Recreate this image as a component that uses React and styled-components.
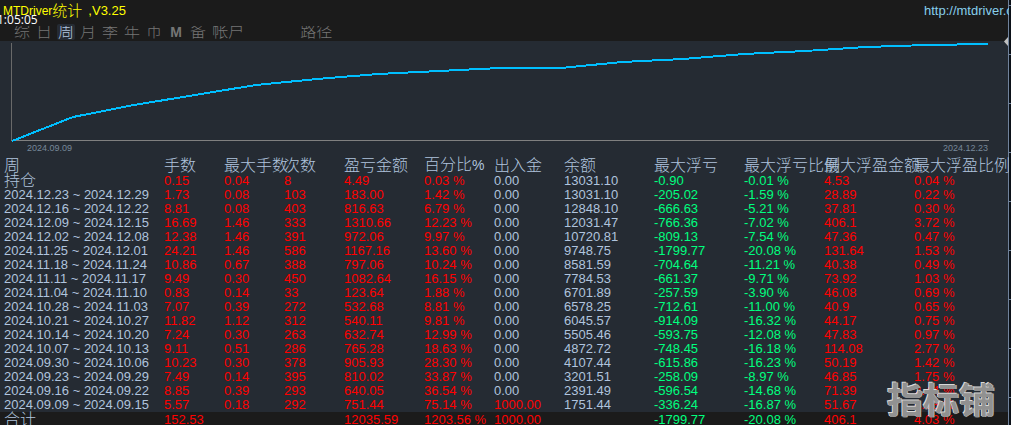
import React, { useState } from 'react';
import styled, { createGlobalStyle } from 'styled-components';

const GlobalStyle = createGlobalStyle`
  * {
    box-sizing: border-box;
  }

  body {
    margin: 0;
    overflow: hidden;
    background: #0b1118;
    color: #b0c4de;
    font-family: 'Liberation Sans', 'Noto Sans CJK SC', sans-serif;
    font-size: 13px;
  }
`;

const Screen = styled.div`
  position: relative;
  display: flex;
  height: 100vh;
  overflow: hidden;
`;

const Panel = styled.main`
  flex: 1;
  min-width: 0;
  background: #252b33;
  border-right: 1px solid #71839c;
  border-bottom: 1px solid #71839c;
`;

const PriceScale = styled.div`
  width: 2px;
  background: repeating-linear-gradient(#0b1118 0 5px, #71839c 5px 6px, #0b1118 6px 49px);
`;

const Header = styled.header`
  height: 41px;
  background: #1b1b1b;
`;

const TitleRow = styled.div`
  display: flex;
  justify-content: space-between;
  height: 24px;
  padding-left: 3px;
  line-height: 22px;
  white-space: nowrap;
`;

const Title = styled.h1`
  display: flex;
  margin: 0;
  color: #ffff00;
  font-size: 12px;
  font-weight: 400;
`;

const TitleSuffix = styled.span`
  font-size: 15px;
  font-weight: 300;
`;

const Version = styled.span`
  margin-left: 6px;
  font-size: 13px;
`;

const SiteLink = styled.a`
  width: 84px;
  color: #87ceeb;
  text-decoration: none;
`;

const Clock = styled.time`
  position: absolute;
  top: 11px;
  left: -3px;
  color: #fff;
  font-family: 'Open Sans', sans-serif;
  font-size: 12px;
  line-height: 17px;
`;

const Tabs = styled.nav`
  display: flex;
  gap: 4px;
  padding-left: 13px;
`;

const Tab = styled.button`
  min-width: 18px;
  height: 16px;
  padding: 2px 1px 0;
  border: none;
  border-radius: 2px;
  background: ${props => (props.$active ? '#252b33' : 'transparent')};
  color: ${props => (props.$active ? '#b0c4de' : '#757575')};
  font-family: inherit;
  font-size: 16px;
  font-weight: 300;
  white-space: nowrap;
  cursor: pointer;

  /* labels are trimmed at the top, like in the terminal */
  span {
    display: block;
    height: 14px;
    line-height: 12px;
    overflow: hidden;
  }

  &.latin {
    font-size: 14px;
    font-weight: 700;
  }

  &.path {
    margin-left: 50px;
  }
`;

const Chart = styled.section`
  height: 115px;
  padding: 1px 18px 0 11px;

  svg {
    display: block;
    width: 100%;
    height: 101px;
  }
`;

const ChartDates = styled.div`
  display: flex;
  justify-content: space-between;
  padding: 0 2px 0 16px;
  color: #778899;
  font-size: 9px;
  line-height: 10px;
`;

const Table = styled.table`
  width: 100%;
  table-layout: fixed;
  border-collapse: collapse;
  white-space: nowrap;
`;

const Col = styled.col`
  width: ${props => (props.$width ? `${props.$width}px` : 'auto')};
`;

const HeadCell = styled.th`
  height: 17px;
  padding: 0;
  font-size: 16px;
  font-weight: 300;
  line-height: 17px;
  text-align: left;

  &:first-child {
    padding-left: 4px;
  }

  small {
    font-size: 14px;
    font-weight: 400;
  }
`;

const tones = {
  up: '#ff0000',
  down: '#00ff7f',
  plain: '#b0c4de',
};

const Cell = styled.td`
  height: 14px;
  padding: 0;
  color: ${props => tones[props.$tone]};
  line-height: 14px;
`;

const PeriodCell = styled.th`
  height: 14px;
  padding: 0 0 0 4px;
  font-size: ${props => (props.$label ? '16px' : '13px')};
  font-weight: ${props => (props.$label ? 300 : 400)};
  line-height: 14px;
  text-align: left;
`;

const TotalRow = styled.tr`
  background: #1b1b1b;

  ${Cell}, ${PeriodCell} {
    line-height: 15px;
  }
`;

const Marker = styled.svg`
  position: absolute;
  top: 37px;
  right: 3px;
`;

const Watermark = styled.div`
  position: absolute;
  right: 16px;
  bottom: 6px;
  color: #919191;
  font-family: 'Noto Sans CJK SC', sans-serif;
  font-size: 36px;
  font-weight: 700;
  line-height: 42px;
  text-shadow: -1px -1px 0 #d8d8d8, 1px 0 0 #b4b4b4;
  pointer-events: none;
`;

const tabs = ['综', '日', '周', '月', '季', '年', '币', 'M', '备', '帐户', '路径'];

const columns = [
  { title: '周', width: 164 },
  { title: '手数', width: 60, tone: 'up' },
  { title: '最大手数', width: 60, tone: 'up' },
  { title: '次数', width: 60, tone: 'up' },
  { title: '盈亏金额', width: 80, tone: 'up' },
  { title: '百分比', unit: '%', width: 70, tone: 'up' },
  { title: '出入金', width: 70, tone: 'plain' },
  { title: '余额', width: 90, tone: 'plain' },
  { title: '最大浮亏', width: 90, tone: 'down' },
  { title: '最大浮亏比例', width: 80, tone: 'down' },
  { title: '最大浮盈金额', width: 90, tone: 'up' },
  { title: '最大浮盈比例', tone: 'up' },
];

const rows = [
  ['持仓', '0.15', '0.04', '8', '4.49', '0.03 %', '0.00', '13031.10', '-0.90', '-0.01 %', '4.53', '0.04 %'],
  ['2024.12.23 ~ 2024.12.29', '1.73', '0.08', '103', '183.00', '1.42 %', '0.00', '13031.10', '-205.02', '-1.59 %', '28.89', '0.22 %'],
  ['2024.12.16 ~ 2024.12.22', '8.81', '0.08', '403', '816.63', '6.79 %', '0.00', '12848.10', '-666.63', '-5.21 %', '37.81', '0.30 %'],
  ['2024.12.09 ~ 2024.12.15', '16.69', '1.46', '333', '1310.66', '12.23 %', '0.00', '12031.47', '-766.36', '-7.02 %', '406.1', '3.72 %'],
  ['2024.12.02 ~ 2024.12.08', '12.38', '1.46', '391', '972.06', '9.97 %', '0.00', '10720.81', '-809.13', '-7.54 %', '47.36', '0.47 %'],
  ['2024.11.25 ~ 2024.12.01', '24.21', '1.46', '586', '1167.16', '13.60 %', '0.00', '9748.75', '-1799.77', '-20.08 %', '131.64', '1.53 %'],
  ['2024.11.18 ~ 2024.11.24', '10.86', '0.67', '388', '797.06', '10.24 %', '0.00', '8581.59', '-704.64', '-11.21 %', '40.38', '0.49 %'],
  ['2024.11.11 ~ 2024.11.17', '9.49', '0.30', '450', '1082.64', '16.15 %', '0.00', '7784.53', '-661.37', '-9.71 %', '73.92', '1.03 %'],
  ['2024.11.04 ~ 2024.11.10', '0.83', '0.14', '33', '123.64', '1.88 %', '0.00', '6701.89', '-257.59', '-3.90 %', '46.08', '0.69 %'],
  ['2024.10.28 ~ 2024.11.03', '7.07', '0.39', '272', '532.68', '8.81 %', '0.00', '6578.25', '-712.61', '-11.00 %', '40.9', '0.65 %'],
  ['2024.10.21 ~ 2024.10.27', '11.82', '1.12', '312', '540.11', '9.81 %', '0.00', '6045.57', '-914.09', '-16.32 %', '44.17', '0.75 %'],
  ['2024.10.14 ~ 2024.10.20', '7.24', '0.30', '263', '632.74', '12.99 %', '0.00', '5505.46', '-593.75', '-12.08 %', '47.83', '0.97 %'],
  ['2024.10.07 ~ 2024.10.13', '9.11', '0.51', '286', '765.28', '18.63 %', '0.00', '4872.72', '-748.45', '-16.18 %', '114.08', '2.77 %'],
  ['2024.09.30 ~ 2024.10.06', '10.23', '0.30', '378', '905.93', '28.30 %', '0.00', '4107.44', '-615.86', '-16.23 %', '50.19', '1.42 %'],
  ['2024.09.23 ~ 2024.09.29', '7.49', '0.14', '395', '810.02', '33.87 %', '0.00', '3201.51', '-258.09', '-8.97 %', '46.85', '1.75 %'],
  ['2024.09.16 ~ 2024.09.22', '8.85', '0.39', '293', '640.05', '36.54 %', '0.00', '2391.49', '-596.54', '-14.68 %', '71.39', '2.44 %'],
  ['2024.09.09 ~ 2024.09.15', '5.57', '0.18', '292', '751.44', '75.14 %', '1000.00', '1751.44', '-336.24', '-16.87 %', '51.67', '4.03 %'],
];

const total = ['合计', '152.53', '', '', '12035.59', '1203.56 %', '1000.00', '', '-1799.77', '-20.08 %', '406.1', '4.03 %'];

// y of the balance line at each week, oldest first
const balance = [99, 75, 63, 53, 43, 37, 32, 29, 26, 26, 20, 17, 12, 9, 5, 3, 2];
const points = balance.map((y, i) => `${1 + i * 61},${y}`).join(' ');

const toneOf = (value, index) => {
  if (columns[index].title === '出入金' && Number(value) > 0) return 'up';
  return columns[index].tone;
};

const RowCells = ({ values }) => (
  <>
    <PeriodCell scope="row" $label={!values[0].includes('~')}>{values[0]}</PeriodCell>
    {values.slice(1).map((value, i) => (
      <Cell key={i} $tone={toneOf(value, i + 1)}>{value}</Cell>
    ))}
  </>
);

const BalanceChart = () => (
  <Chart>
    <svg viewBox="0 0 979 101" preserveAspectRatio="none" role="img" aria-label="余额">
      <path d="M0.5 1V99" stroke="#696969" fill="none" />
      <path d="M0 98.5H978" stroke="#808080" fill="none" />
      <polyline points={points} fill="none" stroke="#00bfff" strokeWidth="2" shapeRendering="crispEdges" />
    </svg>
    <ChartDates>
      <span>2024.09.09</span>
      <span>2024.12.23</span>
    </ChartDates>
  </Chart>
);

const App = () => {
  const [activeTab, setActiveTab] = useState('周');

  const tabClass = tab => {
    if (tab === 'M') return 'latin';
    return tab === '路径' ? 'path' : undefined;
  };

  return (
    <Screen>
      <GlobalStyle />
      <Panel>
        <Header>
          <TitleRow>
            <Title>
              MTDriver
              <TitleSuffix>统计</TitleSuffix>
              <Version>,V3.25</Version>
            </Title>
            <SiteLink href="http://mtdriver.com">http://mtdriver.com</SiteLink>
          </TitleRow>
          <Tabs>
            {tabs.map(tab => (
              <Tab
                key={tab}
                className={tabClass(tab)}
                $active={tab === activeTab}
                onClick={() => setActiveTab(tab)}
              >
                <span>{tab}</span>
              </Tab>
            ))}
          </Tabs>
        </Header>
        <BalanceChart />
        <Table>
          <colgroup>
            {columns.map(column => (
              <Col key={column.title} $width={column.width} />
            ))}
          </colgroup>
          <thead>
            <tr>
              {columns.map(column => (
                <HeadCell key={column.title} scope="col">
                  {column.title}
                  {column.unit && <small>{column.unit}</small>}
                </HeadCell>
              ))}
            </tr>
          </thead>
          <tbody>
            {rows.map(row => (
              <tr key={row[0]}>
                <RowCells values={row} />
              </tr>
            ))}
          </tbody>
          <tfoot>
            <TotalRow>
              <RowCells values={total} />
            </TotalRow>
          </tfoot>
        </Table>
      </Panel>
      <PriceScale />
      <Clock>1:05:05</Clock>
      <Marker width="4" height="9" viewBox="0 0 4 9">
        <path d="M4 0V9L0 4.5Z" fill="#c0c0c0" />
      </Marker>
      <Watermark>指标铺</Watermark>
    </Screen>
  );
};

export default App;
